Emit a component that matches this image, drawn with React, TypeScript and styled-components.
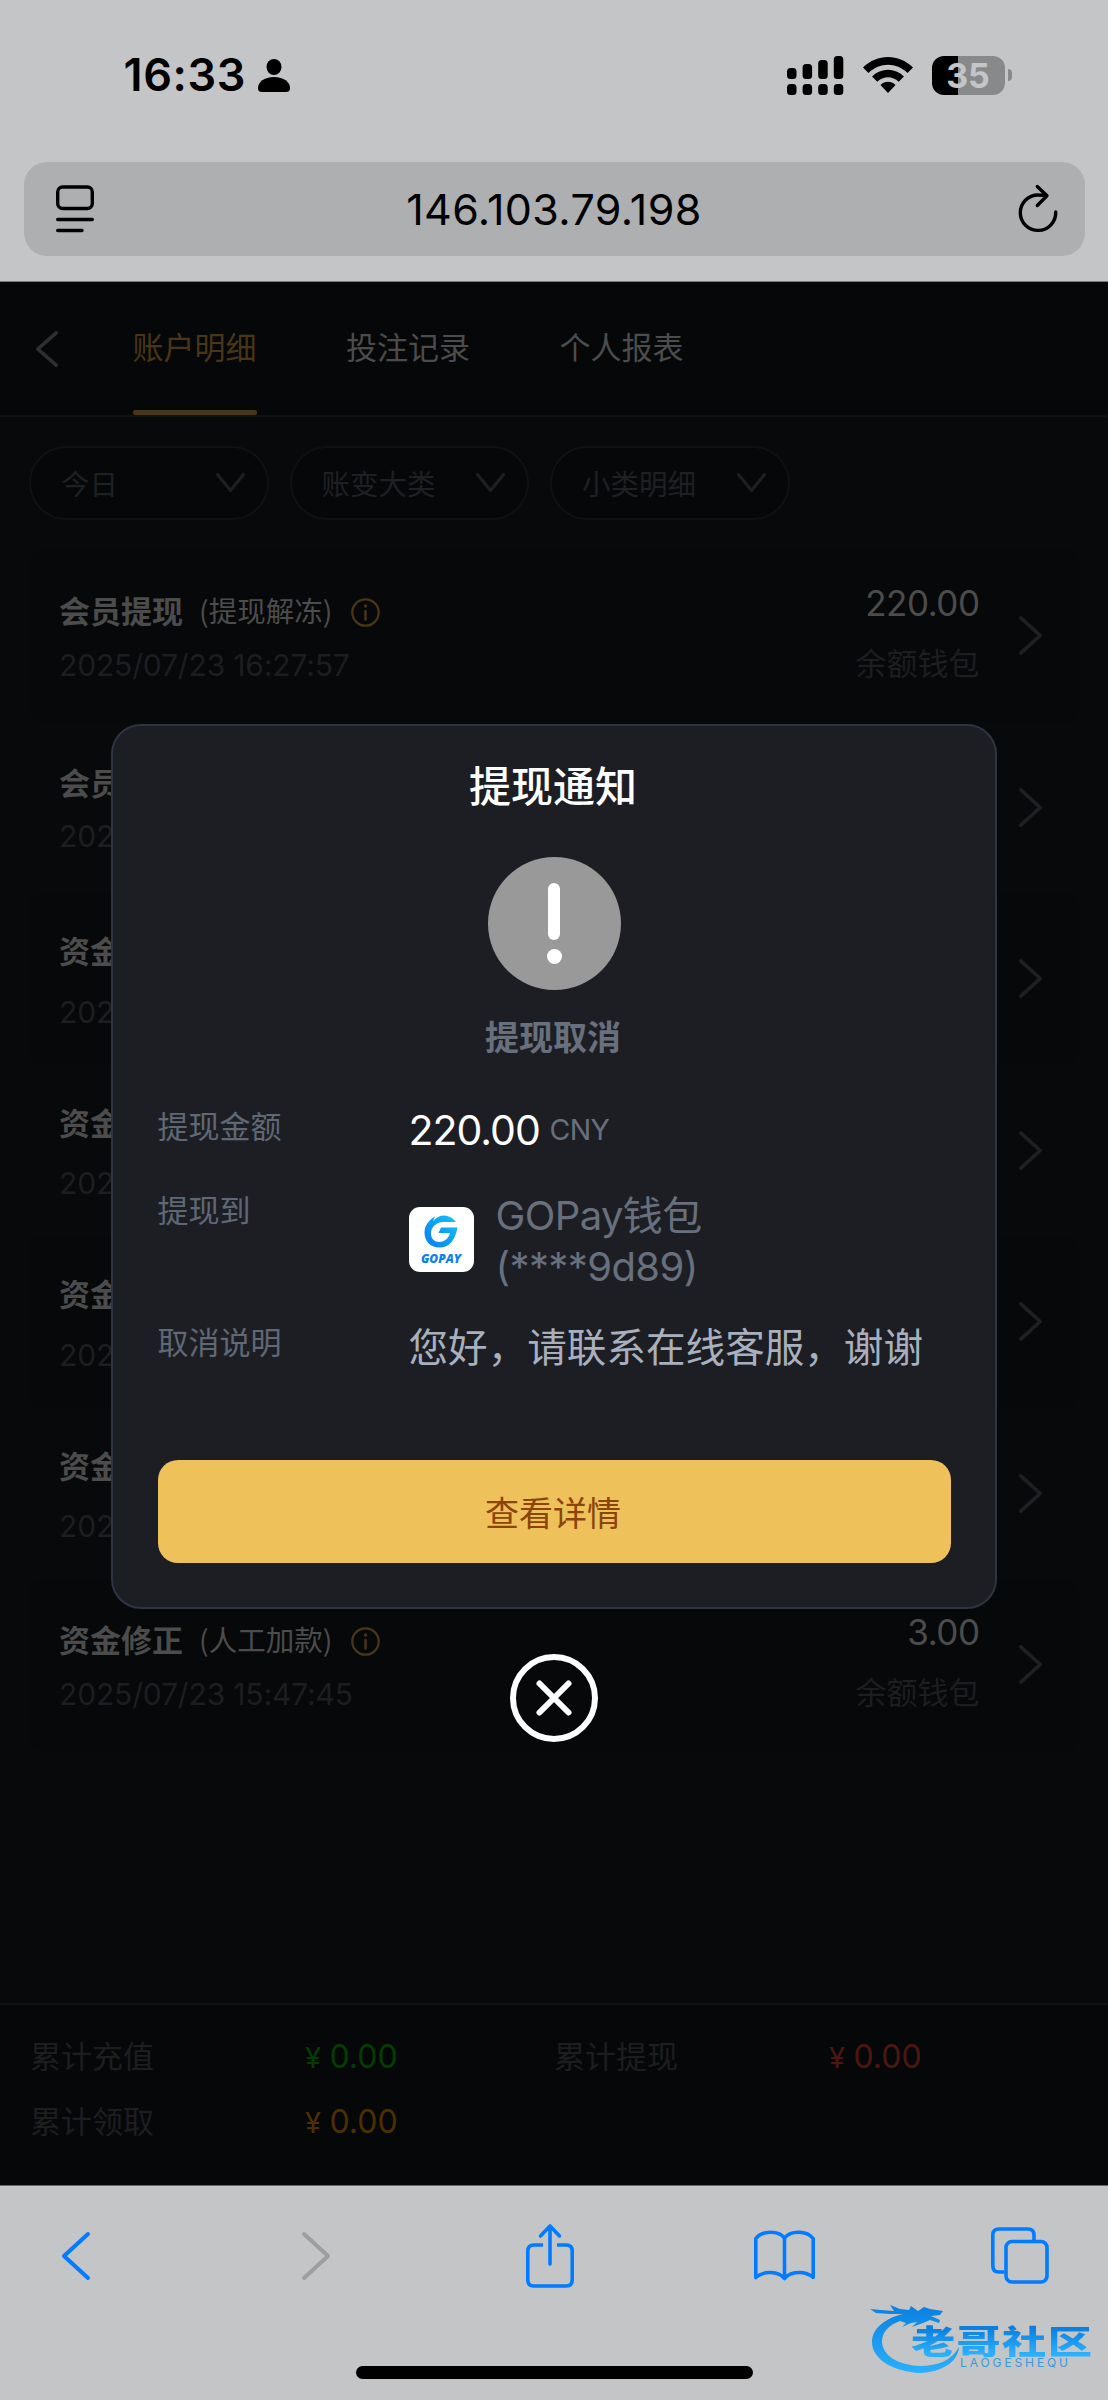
import React from 'react';
import styled, { createGlobalStyle } from 'styled-components';

const CJK = '"Noto Sans CJK SC", "Noto Sans", sans-serif';
const LATIN = 'Inter, "Noto Sans CJK SC", sans-serif';

const GlobalStyle = createGlobalStyle`
  * { box-sizing: border-box; }
  body { margin: 0; background: #08090b; font-family: ${CJK}; }
  button { border: 0; padding: 0; background: none; font: inherit; color: inherit; }
  svg { display: block; flex: none; overflow: visible; }
`;

const Screen = styled.div`
  position: relative;
  display: flex;
  flex-direction: column;
  width: 1108px;
  height: 2400px;
  overflow: hidden;
  background: #08090b;
`;

/* ---------- browser chrome ---------- */

const BrowserTop = styled.header`
  display: flex;
  flex-direction: column;
  height: 282px;
  padding: 0 23.5px;
  background: #c4c5c7;
  border-bottom: 1px solid #77797b;
`;

const StatusBar = styled.div`
  display: flex;
  align-items: flex-start;
  justify-content: space-between;
  height: 162px;
  padding: 51px 73px 0 100px;
`;

const StatusGroup = styled.div<{ $gap: number }>`
  display: flex;
  align-items: center;
  gap: ${(p) => p.$gap}px;
  height: 48px;
`;

const Clock = styled.span`
  width: 124px;
  font: 600 45px/48px ${LATIN};
  letter-spacing: 0.6px;
  color: #000;
`;

const Battery = styled.div`
  display: flex;
  align-items: center;
  gap: 3px;
`;

const BatteryBody = styled.div`
  width: 73px;
  height: 39px;
  border-radius: 12px;
  background: linear-gradient(90deg, #000 0 26px, #88898b 26px);
  color: #c4c5c7;
  font: 700 34px/39px ${LATIN};
  text-align: center;
`;

const BatteryCap = styled.div`
  width: 4px;
  height: 12px;
  border-radius: 0 5px 5px 0;
  background: #88898b;
`;

const AddressBar = styled.div`
  display: flex;
  align-items: center;
  justify-content: space-between;
  height: 94px;
  padding: 0 26px 0 32px;
  border-radius: 23px;
  background: #aeafb1;
`;

const Address = styled.span`
  font: 400 43px/94px ${LATIN};
  letter-spacing: 0.4px;
  margin-right: 4px;
  color: #000;
`;

const BrowserBottom = styled.footer`
  display: flex;
  flex-direction: column;
  align-items: center;
  justify-content: space-between;
  height: 215px;
  padding-bottom: 21px;
  background: #c4c5c7;
  border-top: 1px solid #66686a;
`;

const Toolbar = styled.nav`
  display: flex;
  align-items: center;
  justify-content: space-between;
  width: 100%;
  height: 139px;
  padding: 0 57px 0 45px;
`;

const Tool = styled.span<{ $shift?: number }>`
  display: flex;
  align-items: center;
  justify-content: center;
  width: 62px;
  height: 64px;
  padding-left: ${(p) => p.$shift ?? 0}px;
`;

const HomeIndicator = styled.div`
  width: 397px;
  height: 13px;
  border-radius: 7px;
  background: #000;
`;

/* ---------- page ---------- */

const Page = styled.main`
  display: flex;
  flex-direction: column;
  height: 1903px;
`;

const TabBar = styled.div`
  display: flex;
  height: 135px;
  padding-left: 36px;
  background: #060709;
  border-bottom: 2px solid #101114;
`;

const BackSlot = styled.div`
  display: flex;
  align-items: center;
  width: 97px;
  height: 133px;
`;

const Tab = styled.div`
  display: flex;
  flex-direction: column;
  width: 124px;
  height: 133px;
  margin-right: 89.5px;
`;

const TabText = styled.span<{ $active?: boolean }>`
  height: 128px;
  font: 400 31px/128px ${CJK};
  text-indent: -0.5px;
  color: ${(p) => (p.$active ? '#493618' : '#4c4c4c')};
`;

const TabMarker = styled.span`
  height: 5px;
  border-radius: 2px;
  background: #493618;
`;

const Filters = styled.div`
  display: flex;
  gap: 21px;
  padding: 29px 29px 0;
  height: 133px;
`;

const Pill = styled.div`
  display: flex;
  align-items: center;
  justify-content: space-between;
  width: 239.5px;
  height: 74px;
  padding: 0 22px 2px 30px;
  border: 2px solid #101114;
  border-radius: 37px;
  background: #060709;
  font-size: 28.5px;
  color: #1f2023;
`;

const Rows = styled.div`
  display: flex;
  flex-direction: column;
  padding: 0 29px;
`;

const Row = styled.div<{ $tinted?: boolean }>`
  display: flex;
  align-items: flex-start;
  height: 171.5px;
  padding: 0 37px 0 30px;
  border-radius: 15px;
  background: ${(p) => (p.$tinted ? '#06080a' : 'transparent')};
`;

const RowMain = styled.div<{ $loose?: boolean }>`
  display: flex;
  flex-direction: column;
  flex: 1;
  gap: ${(p) => (p.$loose ? 21.5 : 14.5)}px;
  padding-top: ${(p) => (p.$loose ? 37 : 40)}px;
`;

const RowTitle = styled.div`
  display: flex;
  align-items: center;
  height: 40px;
  font: 700 31px/40px ${CJK};
  color: #4c4c4c;
`;

const RowNote = styled.span`
  width: 138px;
  margin: 0 14px 0 16px;
  font: 400 28.5px/40px ${CJK};
`;

const InfoSlot = styled.span`
  padding-top: 5px;
`;

const RowDate = styled.div`
  font: 400 30px/40px ${LATIN};
  letter-spacing: -0.15px;
  color: #1d1e20;
`;

const RowSide = styled.div`
  display: flex;
  flex-direction: column;
  align-items: flex-end;
  gap: 19px;
  padding-top: 32.5px;
  margin-right: 39.5px;
`;

const Amount = styled.div`
  font: 400 35px/40px ${LATIN};
  letter-spacing: -0.5px;
  color: #4c4c4c;
`;

const Wallet = styled.div`
  font: 400 31px/40px ${CJK};
  color: #1d1e20;
`;

const RowArrow = styled.div`
  display: flex;
  align-items: center;
  height: 171.5px;
`;

const Totals = styled.div`
  display: grid;
  grid-template-columns: 275px 249px 275px 249px;
  grid-auto-rows: 65px;
  height: 182px;
  margin-top: auto;
  padding: 19px 30px 0;
  background: #060709;
  border-top: 2px solid #101114;
`;

const TotalLabel = styled.span`
  font: 400 31px/62px ${CJK};
  color: #1d1e20;
`;

const TotalValue = styled.span<{ $color: string }>`
  font: 400 32px/65px ${LATIN};
  color: ${(p) => p.$color};
`;

const Yen = styled.span`
  font: 400 29px/60px ${LATIN};
  margin-right: 8.5px;
`;

/* ---------- notice dialog ---------- */

const Dialog = styled.section`
  position: absolute;
  left: 111px;
  top: 724px;
  display: flex;
  flex-direction: column;
  width: 886px;
  height: 885px;
  padding: 0 44.5px;
  border: 2.5px solid #2e3541;
  border-radius: 30px;
  background: #1d1e24;
`;

const DialogTitle = styled.h2`
  margin: 28px 2px 0 0;
  height: 60px;
  font: 500 42px/60px ${CJK};
  text-align: center;
  color: #fff;
`;

const StatusIcon = styled.div`
  display: flex;
  flex-direction: column;
  align-items: center;
  align-self: center;
  gap: 9px;
  width: 133px;
  height: 133px;
  margin-top: 43px;
  padding-top: 26px;
  border-radius: 50%;
  background: #999;
`;

const BangStem = styled.div`
  width: 12px;
  height: 57px;
  border-radius: 6px;
  background: #fff;
`;

const BangDot = styled.div`
  width: 15px;
  height: 15px;
  border-radius: 50%;
  background: #fff;
`;

const StatusText = styled.div`
  margin: 26px 2px 0 0;
  height: 40px;
  font: 700 34px/40px ${CJK};
  text-align: center;
  color: #68707d;
`;

const Details = styled.dl`
  display: grid;
  grid-template-columns: 251px 1fr;
  grid-template-rows: 84px 132px 90px;
  margin: 48.5px 0 49px;
`;

const Label = styled.dt`
  font: 400 31px/40px ${CJK};
  color: #5f6874;
`;

const Value = styled.dd<{ $color: string; $drop?: number }>`
  display: flex;
  align-items: flex-start;
  margin: 0;
  padding-top: ${(p) => p.$drop ?? 0}px;
  font: 400 39.6px/44px ${CJK};
  color: ${(p) => p.$color};
  white-space: nowrap;
`;

const Sum = styled.span`
  width: 141px;
  padding-top: 5.5px;
  font: 400 41px/40px ${LATIN};
  letter-spacing: -1px;
`;

const Currency = styled.span`
  padding-top: 5px;
  font: 400 28.5px/40px ${LATIN};
  letter-spacing: -0.6px;
  color: #68707d;
`;

const WalletLogo = styled.div`
  display: flex;
  flex-direction: column;
  align-items: center;
  width: 65px;
  height: 65px;
  margin: 18px 22px 0 0;
  padding-top: 8px;
  border-radius: 11px;
  background: #fff;
`;

const WalletLogoText = styled.span`
  margin-top: 4px;
  font: italic 800 12px/13px "Open Sans", sans-serif;
  color: #0d7fe8;
`;

const WalletName = styled.div`
  padding-top: 1px;
  font: 400 40px/51px ${LATIN};
  letter-spacing: -0.6px;
`;

const Primary = styled.button`
  height: 103px;
  padding-right: 2px;
  border-radius: 20px;
  background: #efc15a;
  font: 400 34px/103px ${CJK};
  color: #8a450b;
`;

const Close = styled.div`
  position: absolute;
  left: 510px;
  top: 1654px;
`;

/* ---------- community mark ---------- */

const Mark = styled.div`
  position: absolute;
  left: 866px;
  top: 2296px;
  width: 242px;
  height: 84px;
  padding: 27px 0 0 45px;
`;

const MarkArt = styled.div`
  position: absolute;
  left: 0;
  top: 0;
`;

const MarkName = styled.div`
  width: 140px;
  height: 34px;
  transform: scaleX(1.34);
  transform-origin: 0 0;
  font: 900 33px/34px ${CJK};
  letter-spacing: 1px;
  white-space: nowrap;
  background: linear-gradient(#0a7fe0 15%, #2bb0fb 90%);
  background-clip: text;
  -webkit-background-clip: text;
  color: transparent;
`;

const MarkLatin = styled.div`
  margin: -1px 0 0 49px;
  width: 120px;
  font: 400 12px/14px ${LATIN};
  letter-spacing: 2.9px;
  color: #3a98df;
`;

/* ---------- icons ---------- */

type ChevronProps = { w: number; h: number; dir: 'left' | 'right' | 'down'; color: string; stroke: number };

const Chevron = ({ w, h, dir, color, stroke }: ChevronProps) => {
  const s = stroke / 2;
  const points = {
    left: `${w - s},${s} ${s},${h / 2} ${w - s},${h - s}`,
    right: `${s},${s} ${w - s},${h / 2} ${s},${h - s}`,
    down: `${s},${s} ${w / 2},${h - s} ${w - s},${s}`,
  }[dir];
  return (
    <svg width={w} height={h}>
      <polyline points={points} fill="none" stroke={color} strokeWidth={stroke} strokeLinecap="round" strokeLinejoin="round" />
    </svg>
  );
};

const Person = () => (
  <svg width="32" height="33" viewBox="0 0 32 33">
    <ellipse cx="16" cy="8" rx="7.5" ry="8" />
    <path d="M0 29C0 23 6 18 16 18s16 5 16 11c0 3-1.500 4-4 4H4c-2.500 0-4-1-4-4Z" />
  </svg>
);

const Signal = () => (
  <svg width="57" height="39" viewBox="0 0 57 39">
    {[12, 8, 4, 0].map((top, i) => (
      <g key={top}>
        <rect x={i * 15.6} y={top} width="9.5" height={23 - top} rx="3.5" />
        <rect x={i * 15.6} y="28" width="9.5" height="11" rx="3.5" />
      </g>
    ))}
  </svg>
);

const Wifi = () => (
  <svg width="50" height="36" viewBox="0 0 50 36">
    <path d="M0 10.500C14-3.500 36-3.500 50 10.500L44.500 16C33.500 5 16.500 5 5.500 16Z" />
    <path d="M9 19.500C18 10.500 32 10.500 41 19.500L35.700 24.800C29.700 18.800 20.300 18.800 14.300 24.800Z" />
    <path d="M17.500 28C22 23.800 28 23.800 32.500 28L25 36Z" />
  </svg>
);

const PageMenu = () => (
  <svg width="38" height="48" viewBox="0 0 38 48" fill="none" stroke="#000" strokeWidth="3.4" strokeLinecap="round">
    <rect x="1.7" y="2" width="34.6" height="21.5" rx="5" />
    <path d="M1.700 34.500H36.300M1.700 45.500H26" />
  </svg>
);

const Reload = () => (
  <svg width="40" height="48" viewBox="0 0 40 48" fill="none" stroke="#000" strokeWidth="3.4" strokeLinecap="round" strokeLinejoin="round">
    <path d="M37.700 27A17.700 17.700 0 1 1 20 10Q25 10 28.500 10.700M19.300 1.500L29 10.700L19.300 20.500" />
  </svg>
);

const Info = () => (
  <svg width="29" height="29" viewBox="0 0 29 29" fill="none" stroke="#493618" strokeWidth="2.3" strokeLinecap="round">
    <circle cx="14.5" cy="14.5" r="13.2" />
    <path d="M14.500 13V21.500" strokeWidth="2.5" />
    <circle cx="14.5" cy="8" r="1.7" fill="#493618" stroke="none" />
  </svg>
);

const blue = { fill: 'none', stroke: '#017bff', strokeWidth: 3.6, strokeLinecap: 'round', strokeLinejoin: 'round' } as const;

const Share = () => (
  <svg width="48" height="62" viewBox="0 0 48 62" {...blue}>
    <path d="M17 20H7.800Q1.800 20 1.800 26V55Q1.800 61 7.800 61H40.200Q46.200 61 46.200 55V26Q46.200 20 40.200 20H31" strokeLinecap="butt" />
    <path d="M24 39V1.500M14.500 11L24 1L33.500 11" />
  </svg>
);

const Book = () => (
  <svg width="61" height="51" viewBox="0 0 61 51" {...blue}>
    <path d="M30.500 48.500C24 41 10 40.500 1.800 47.500V8.500C8 0.500 24 0 30.500 8C37 0 53 0.500 59.200 8.500V47.500C51 40.500 37 41 30.500 48.500ZM30.500 8V48" />
  </svg>
);

const Windows = () => (
  <svg width="58" height="57" viewBox="0 0 58 57" {...blue}>
    <path d="M43 13V8Q43 2 37 2H7.800Q1.800 2 1.800 8V39Q1.800 45 7.800 45H13" strokeLinecap="butt" />
    <rect x="15" y="14.5" width="41" height="40.5" rx="6" />
  </svg>
);

const GopayGlyph = () => (
  <svg width="34" height="33" viewBox="0 0 34 33">
    <defs>
      <linearGradient id="gopay" x1="0" y1="1" x2="1" y2="0">
        <stop offset="0" stopColor="#0a7cf0" />
        <stop offset="1" stopColor="#12c4f5" />
      </linearGradient>
    </defs>
    <path
      fill="url(#gopay)"
      d="M32 7Q27 0.500 20 0.500C16 0.500 12 2.500 9 6L11 1.500C4 5.500 0.500 11 0.500 18C0.500 26.500 7 32.500 15.500 32.500C25 32.500 31 26 33.500 12.500H17L14.500 18H26C24.500 23.500 20.500 27 15.500 27C10.500 27 7 23.500 7 18.500C7 12 12 7.500 19 7Z"
    />
  </svg>
);

const CloseIcon = () => (
  <svg width="88" height="88" viewBox="0 0 88 88" fill="none" stroke="#fff" strokeWidth="6" strokeLinecap="round">
    <circle cx="44" cy="44" r="41" />
    <path d="M29.500 29.500L58.500 58.500M58.500 29.500L29.500 58.500" />
  </svg>
);

const Dragon = () => (
  <svg width="100" height="84" viewBox="0 0 100 84">
    <defs>
      <linearGradient id="dragon" x1="0" y1="0" x2="0" y2="1">
        <stop offset="0" stopColor="#0a7fe0" />
        <stop offset="1" stopColor="#2bb0fb" />
      </linearGradient>
    </defs>
    <path
      fill="url(#dragon)"
      d="M37 18C20 22 6 32 6 46C6 64 29 76 54 77C76 76 92 66 93 51C86 64 72 70 54 70C32 69 17 60 16 46C16 36 23 29 34 25L40 27L36 31L45 27L51 26L46 31L57 27L64 24L73 27L74 24L65 20L74 19L77 15L64 13L58 11L52 15L45 10L43 14L34 13L24 9L28 15L15 14L4 13L10 17L24 18Z"
    />
  </svg>
);

/* ---------- data ---------- */

type Entry = { title: string; date: string; note?: string; amount?: string };

const entries: Entry[] = [
  { title: '会员提现', note: '(提现解冻)', date: '2025/07/23 16:27:57', amount: '220.00' },
  { title: '会员', date: '2025' },
  { title: '资金', date: '2025' },
  { title: '资金', date: '2025' },
  { title: '资金', date: '2025' },
  { title: '资金', date: '2025' },
  { title: '资金修正', note: '(人工加款)', date: '2025/07/23 15:47:45', amount: '3.00' },
];

const totals = [
  { label: '累计充值', color: '#033d03' },
  { label: '累计提现', color: '#4c1713' },
  { label: '累计领取', color: '#4c3000' },
];

export default function App() {
  return (
    <Screen>
      <GlobalStyle />
      <BrowserTop>
        <StatusBar>
          <StatusGroup $gap={10}>
            <Clock>16:33</Clock>
            <Person />
          </StatusGroup>
          <StatusGroup $gap={19}>
            <Signal />
            <Wifi />
            <Battery>
              <BatteryBody>35</BatteryBody>
              <BatteryCap />
            </Battery>
          </StatusGroup>
        </StatusBar>
        <AddressBar>
          <PageMenu />
          <Address>146.103.79.198</Address>
          <Reload />
        </AddressBar>
      </BrowserTop>

      <Page>
        <TabBar>
          <BackSlot>
            <Chevron w={22} h={36} dir="left" color="#2e2f33" stroke={3.6} />
          </BackSlot>
          <Tab>
            <TabText $active>账户明细</TabText>
            <TabMarker />
          </Tab>
          <Tab>
            <TabText>投注记录</TabText>
          </Tab>
          <Tab>
            <TabText>个人报表</TabText>
          </Tab>
        </TabBar>
        <Filters>
          {['今日', '账变大类', '小类明细'].map((name) => (
            <Pill key={name}>
              {name}
              <Chevron w={29} h={19} dir="down" color="#1f2023" stroke={3} />
            </Pill>
          ))}
        </Filters>
        <Rows>
          {entries.map((e, i) => (
            <Row key={i} $tinted={i % 2 === 0}>
              <RowMain $loose={i > 1 && i < 6}>
                <RowTitle>
                  {e.title}
                  {e.note && <RowNote>{e.note}</RowNote>}
                  {e.note && (
                    <InfoSlot>
                      <Info />
                    </InfoSlot>
                  )}
                </RowTitle>
                <RowDate>{e.date}</RowDate>
              </RowMain>
              {e.amount && (
                <RowSide>
                  <Amount>{e.amount}</Amount>
                  <Wallet>余额钱包</Wallet>
                </RowSide>
              )}
              <RowArrow>
                <Chevron w={23} h={39} dir="right" color="#1f2023" stroke={3.6} />
              </RowArrow>
            </Row>
          ))}
        </Rows>
        <Totals>
          {totals.map((t) => (
            <React.Fragment key={t.label}>
              <TotalLabel>{t.label}</TotalLabel>
              <TotalValue $color={t.color}>
                <Yen>¥</Yen>0.00
              </TotalValue>
            </React.Fragment>
          ))}
        </Totals>
      </Page>

      <BrowserBottom>
        <Toolbar>
          <Tool>
            <Chevron w={28} h={48} dir="left" color="#017bff" stroke={4} />
          </Tool>
          <Tool $shift={8}>
            <Chevron w={28} h={48} dir="right" color="#9d9ea0" stroke={4} />
          </Tool>
          <Tool $shift={3}>
            <Share />
          </Tool>
          <Tool>
            <Book />
          </Tool>
          <Tool>
            <Windows />
          </Tool>
        </Toolbar>
        <HomeIndicator />
      </BrowserBottom>

      <Dialog>
        <DialogTitle>提现通知</DialogTitle>
        <StatusIcon>
          <BangStem />
          <BangDot />
        </StatusIcon>
        <StatusText>提现取消</StatusText>
        <Details>
          <Label>提现金额</Label>
          <Value $color="#fff">
            <Sum>220.00</Sum>
            <Currency>CNY</Currency>
          </Value>
          <Label>提现到</Label>
          <Value $color="#68707d">
            <WalletLogo>
              <GopayGlyph />
              <WalletLogoText>GOPAY</WalletLogoText>
            </WalletLogo>
            <WalletName>
              GOPay钱包
              <br />
              (****9d89)
            </WalletName>
          </Value>
          <Label>取消说明</Label>
          <Value $color="#a8b0be" $drop={2}>
            您好，请联系在线客服，谢谢
          </Value>
        </Details>
        <Primary>查看详情</Primary>
      </Dialog>
      <Close>
        <CloseIcon />
      </Close>

      <Mark>
        <MarkArt>
          <Dragon />
        </MarkArt>
        <MarkName>老哥社区</MarkName>
        <MarkLatin>LAOGESHEQU</MarkLatin>
      </Mark>
    </Screen>
  );
}
